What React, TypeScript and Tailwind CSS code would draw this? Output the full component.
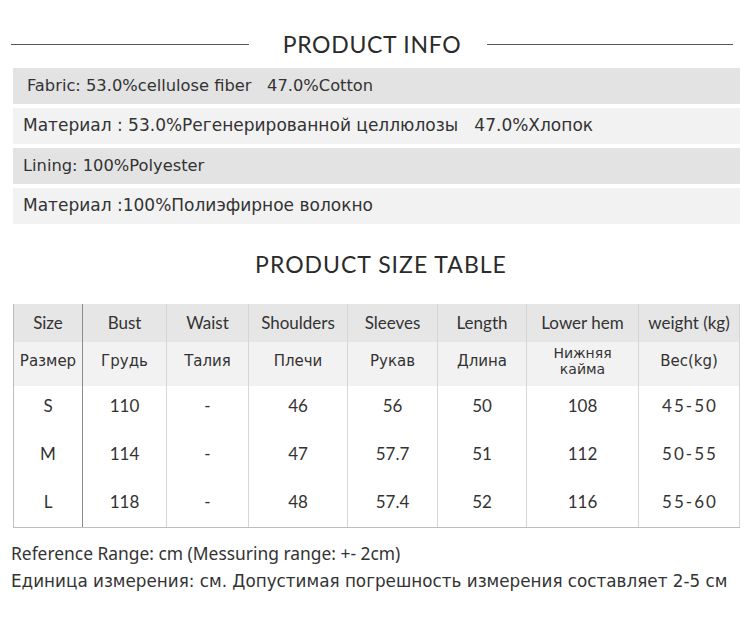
const infoRows = [
  { text: "Fabric: 53.0%cellulose fiber\u00a0\u00a0 47.0%Cotton", dark: true, pl: "pl-[14px]", size: "text-[16.3px]" },
  { text: "Материал : 53.0%Регенерированной целлюлозы\u00a0\u00a0 47.0%Хлопок", dark: false, pl: "pl-[10px]", size: "text-[17px]" },
  { text: "Lining: 100%Polyester", dark: true, pl: "pl-[10px]", size: "text-[16.3px]" },
  { text: "Материал :100%Полиэфирное волокно", dark: false, pl: "pl-[10px]", size: "text-[17px]" },
];

const headEn = ["Size", "Bust", "Waist", "Shoulders", "Sleeves", "Length", "Lower hem", "weight (kg)"];
const headRu = ["Размер", "Грудь", "Талия", "Плечи", "Рукав", "Длина", "Нижняя\nкайма", "Вес(kg)"];
const rows = [
  ["S", "110", "-", "46", "56", "50", "108", "45-50"],
  ["M", "114", "-", "47", "57.7", "51", "112", "50-55"],
  ["L", "118", "-", "48", "57.4", "52", "116", "55-60"],
];

// ширины колонок по скриншоту
const cols = "grid-cols-[70px_84px_82px_99px_90px_89px_112px_101px]";

function cellBorder(i: number) {
  if (i === 0) return "border-l border-l-[#bdbdbd] border-r border-r-[#8c8c8c]";
  return "border-r border-r-[#d6d6d6]";
}

function Title({ children, wide }: { children: string; wide?: boolean }) {
  return (
    <div className="flex items-center h-[48px]">
      {wide ? (
        <>
          <div className="ml-[11px] w-[238px] h-px bg-[#555]" />
          <div className="w-[238px] text-center text-[23px] tracking-[0.7px] text-[#2b2b2b] pl-[8px]">
            {children}
          </div>
          <div className="w-[246px] h-px bg-[#555]" />
        </>
      ) : (
        <div className="w-full text-center text-[23px] tracking-[1px] text-[#2b2b2b] pl-[12px]">
          {children}
        </div>
      )}
    </div>
  );
}

export default function App() {
  return (
    <div className="w-[750px] h-[618px] bg-white overflow-hidden font-['Lato',sans-serif] text-[#333]">
      <div className="pt-[20px]">
        <Title wide>PRODUCT INFO</Title>
      </div>

      {/* информация о материале */}
      <div className="ml-[13px] w-[727px] flex flex-col gap-[4px] font-['DejaVu_Sans',sans-serif]">
        {infoRows.map((r, i) => (
          <div
            key={i}
            className={`h-[36px] flex items-center ${r.pl} ${r.size} ${r.dark ? "bg-[#e3e3e3]" : "bg-[#f2f2f2]"}`}
          >
            {r.text}
          </div>
        ))}
      </div>

      <div className="pt-[16px]">
        <Title>PRODUCT SIZE TABLE</Title>
      </div>

      {/* таблица размеров */}
      <div className="mt-[16px] ml-[13px] w-[727px] border-b border-b-[#bdbdbd]">
        <div className={`grid ${cols} h-[38px] bg-[#e6e6e6]`}>
          {headEn.map((h, i) => (
            <div key={i} className={`flex items-center justify-center text-[17px] ${cellBorder(i)}`}>
              {h}
            </div>
          ))}
        </div>
        <div className={`grid ${cols} h-[44px] bg-[#f2f2f2] font-['DejaVu_Sans',sans-serif]`}>
          {headRu.map((h, i) => (
            <div
              key={i}
              className={`flex items-center justify-center text-center whitespace-pre-line pb-[6px] ${
                h.includes("\n") ? "text-[14px] leading-[16px]" : "text-[15px]"
              } ${cellBorder(i)}`}
            >
              {h}
            </div>
          ))}
        </div>
        {rows.map((r, ri) => (
          <div key={ri} className={`grid ${cols} ${ri === 2 ? "h-[45px]" : "h-[48px]"}`}>
            {r.map((c, i) => (
              <div
                key={i}
                className={`flex justify-center pt-[8px] leading-[24px] text-[17px] ${
                  i === 7 ? "tracking-[2px] pl-[2px]" : ""
                } ${cellBorder(i)}`}
              >
                {c}
              </div>
            ))}
          </div>
        ))}
      </div>

      <div className="mt-[11px] pl-[11px] leading-[28px] text-[#333]">
        <div className="font-['Noto_Sans',sans-serif] text-[17.4px]">
          Reference Range: cm (Messuring range: +- 2cm)
        </div>
        <div className="font-['DejaVu_Sans',sans-serif] text-[16.8px]">
          Единица измерения: см. Допустимая погрешность измерения составляет 2-5 см
        </div>
      </div>
    </div>
  );
}
